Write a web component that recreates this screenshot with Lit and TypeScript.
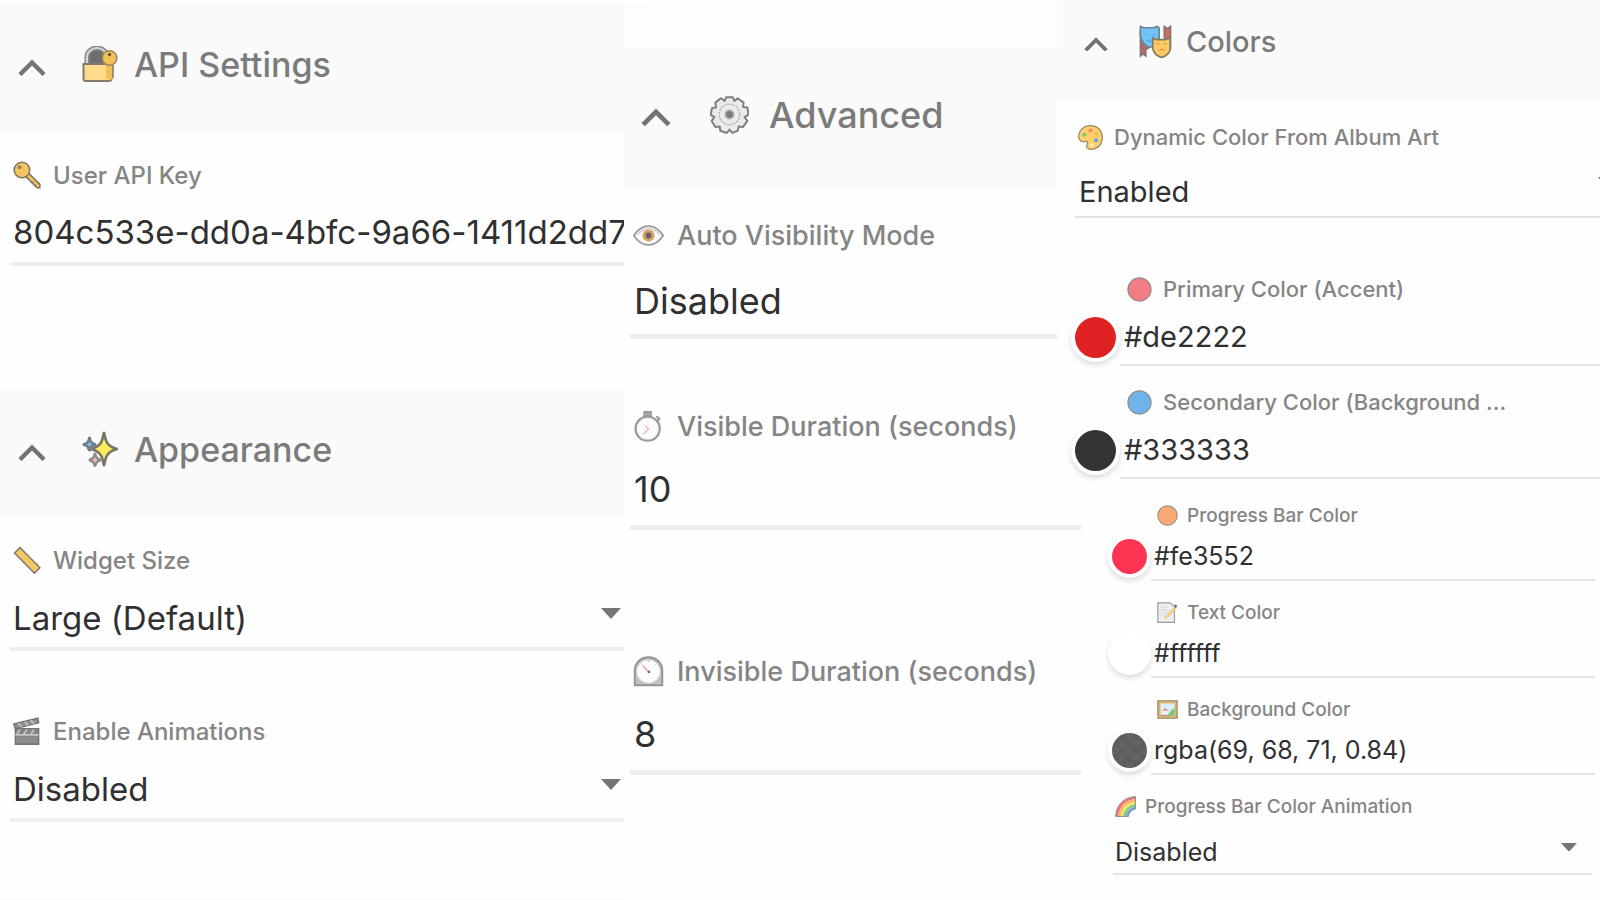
import { LitElement, html, svg, css, nothing } from "lit";
import { customElement, property } from "lit/decorators.js";

const icon = (body: unknown) =>
  html`<svg class="glyph" viewBox="0 0 36 36" aria-hidden="true">${body}</svg>`;

const disc = (fill: string) =>
  svg`<circle cx="18" cy="18" r="16.6" fill=${fill} stroke="#8c8c84" stroke-width="1.8"/>`;

const GLYPHS: Record<string, unknown> = {
  lock: svg`
    <path d="M5 18V11a10 9 0 0 1 20 0v7" fill="#6e6e6e" stroke="#8a8a8a" stroke-width="5"/>
    <path d="M5 18V11a10 9 0 0 1 20 0v7" fill="none" stroke="#d8d8d8" stroke-width="2"/>
    <path d="M1.500 18h28v14.500q0 2.500-2.500 2.500H4q-2.500 0-2.500-2.500z" fill="#ffd98c" stroke="#85796a" stroke-width="2"/>
    <path d="M24 17h7v15l-3 2.500-4-2.500z" fill="#eebf5c"/>
    <path d="M31 18v14" stroke="#85796a" stroke-width="1.500"/>
    <circle cx="27.500" cy="12" r="7.300" fill="#f0c25c" stroke="#9b855a" stroke-width="1.500"/>
    <circle cx="27.500" cy="8.500" r="1.700" fill="#66563a"/>
    <path d="M10 24h1M16 23h1M13 29h1M20 28h1" stroke="#f6ee60" stroke-width="1.500"/>`,
  key: svg`
    <path d="M15 18.500 31 34.500h3.500V30L19 14.500z" fill="#f2c35b" stroke="#7d7468" stroke-width="2"/>
    <circle cx="11.500" cy="11.500" r="10" fill="#f4c662" stroke="#7d7468" stroke-width="2"/>
    <circle cx="8.500" cy="8" r="2.500" fill="#8b816f"/>
    <path d="m23 28 3-1m1 5 3-1" stroke="#7d7468" stroke-width="1.800"/>`,
  sparkles: svg`
    <path d="M22 1c1.500 10 3.500 14.500 13 17-9.500 2.500-11.500 7-13 17-1.500-10-3.500-14.500-13-17 9.500-2.500 11.500-7 13-17z" fill="#fdec5e" stroke="#77756a" stroke-width="2.600"/>
    <path d="M7.500 6c.8 5 2 6.500 6.500 7.500-4.500 1-5.700 2.500-6.500 6.500-.8-4-2-5.500-6.500-6.500 4.500-1 5.700-2.500 6.500-7.500z" fill="#74bdf0" stroke="#727d86" stroke-width="2.600"/>
    <path d="M13 22c.8 4.500 2 6 6 7-4 1-5.200 2.500-6 6.500-.8-4-2-5.500-6-6.500 4-1 5.200-2.500 6-7z" fill="#f5b9ad" stroke="#888" stroke-width="2.400"/>`,
  ruler: svg`
    <path d="M9 2 34.500 28 27.500 35 2 9z" fill="#f3c866" stroke="#827a70" stroke-width="2"/>
    <path d="m12 6-2 2m7 2-2 2m7 2-2 2m7 2-2 2m7 2-2 2m7 2-2 2" stroke="#c9a55d" stroke-width="1.200"/>`,
  clapper: svg`
    <path d="M3 15h30v20H3z" fill="#868686" stroke="#747474" stroke-width="1.800"/>
    <path d="M1 9 32 1.500l1 6L3 15z" fill="#929292" stroke="#747474" stroke-width="1.800"/>
    <path d="m7 8 4 5m4-7 4 5m4-7 4 5M9 16l-4 6m13-6-4 6m13-6-4 6M3 23h30" stroke="#c6c6c6" stroke-width="2"/>
    <path d="M4 27h28M4 31h28" stroke="#999" stroke-width="1.200"/>`,
  gear: svg`
    <path d="M15 2h6l1.500 3.500 3-2.500 5.500 4-.5 4 4 .5 1 6.500-3.500 2.500 2.500 3.500-4 5.500-4-.5L25.500 33l-5 2-2.500-3-2.500 3-6-2-.5-4-4 .5-3.500-5.500 2.500-3.500L.5 18l1.500-6 3.500-.5L5 7l5-4 3.500 2.500z" fill="#ebebeb" stroke="#808080" stroke-width="1.900" stroke-linejoin="round"/>
    <circle cx="18" cy="18" r="9.500" fill="none" stroke="#b4b4b4" stroke-width="1.300" stroke-dasharray="2 1"/>
    <circle cx="18" cy="18" r="3.800" fill="#7b7b7b" stroke="#adadad" stroke-width="1.500"/>`,
  eye: svg`
    <path d="M1 18q7-11 17-11t17 11q-7 11-17 11T1 18z" fill="#fbfbfb" stroke="#989898" stroke-width="2"/>
    <path d="M5 17q6-7 13-7t13 7" fill="none" stroke="#c6c6c6" stroke-width="1.400"/>
    <circle cx="18" cy="18" r="7" fill="#daa06a"/>
    <circle cx="18" cy="18" r="3.400" fill="#6d625c"/>`,
  stopwatch: svg`
    <path d="M13 1h8v5h-8zM27 6l4 3-2 3" fill="#aaa" stroke="#979797" stroke-width="1.800"/>
    <circle cx="17" cy="20.500" r="14" fill="#fcfcfc" stroke="#999" stroke-width="2.600"/>
    <circle cx="17" cy="20.500" r="11" fill="none" stroke="#ddd" stroke-width="1" stroke-dasharray="1 3"/>
    <path d="m14 17 4 4-6 6" fill="none" stroke="#f0b5ac" stroke-width="1.500"/>`,
  timer: svg`
    <path d="M2 34V17C2 8 9 1.500 18 1.500S34 8 34 17v17z" fill="#c2c2c2" stroke="#949494" stroke-width="2.200"/>
    <circle cx="18" cy="18" r="13.500" fill="#fcfcfc" stroke="#dedede"/>
    <path d="M18 5v2M9 9l1 1M27 9l-1 1" stroke="#bbb"/>
    <path d="m11 11 7 7" stroke="#f0a49c" stroke-width="1.700"/>
    <circle cx="18.500" cy="18.500" r="1.600" fill="#777"/>`,
  masks: svg`
    <path d="M1.500 8v26l3-2.500 3 2.500V27l3-2v-5z" fill="#b9686a" stroke="#777" stroke-width="1.600"/>
    <path d="M34.500 26V1.500L31 4l-3.500-2.500V14l3 3z" fill="#c96b66" stroke="#777" stroke-width="1.600"/>
    <path d="M1.500 1.500 5 3h11l4-1.500 2 2V15q-3 7-10.500 9.500Q4 22 1.500 12z" fill="#70c3f4" stroke="#6c8391" stroke-width="1.800" stroke-linejoin="round"/>
    <path d="m7 10 2 1m6 0 2-1M9 17q3 2 6 0" fill="none" stroke="#4fa0d4" stroke-width="1.300"/>
    <path d="m15 14 4 2h10l5-2v13q-2 6-9 8.500-8-2-10-9.500z" fill="#fbcb63" stroke="#84775c" stroke-width="1.800" stroke-linejoin="round"/>
    <path d="m19 21 3-1m5 0 3 1m-9 7q4-3 7 0" fill="none" stroke="#d39b41" stroke-width="1.300"/>`,
  palette: svg`
    <path d="M18 1C8 1 1 8 1 17c0 5 4 8 9 7 4-1 5 1 3 4-2 4 1 7 6 7 9 0 16-7 16-17S28 1 18 1z" fill="#fbd06c" stroke="#98866a" stroke-width="1.800"/>
    <circle cx="9" cy="14" r="2.800" fill="#74cd72"/><circle cx="18" cy="8" r="2.800" fill="#f7846d"/>
    <circle cx="26.500" cy="13" r="2.600" fill="#f3be45"/><circle cx="26" cy="22" r="3" fill="#6aa7dd"/>
    <circle cx="20" cy="29" r="2.500" fill="#fff0cf"/>`,
  red: disc("#f47c85"),
  blue: disc("#70b3ea"),
  orange: disc("#f9aa75"),
  memo: svg`
    <path d="M1.500 1.500H22l8 6V35H1.500z" fill="#efefef" stroke="#999" stroke-width="2"/>
    <path d="M6 9h14M6 14h16M6 19h12M6 24h8" stroke="#d2d2d2" stroke-width="1.400"/>
    <path d="m13 29 2-5L30 8l3 3-15 16z" fill="#f8d089" stroke="#e0be85" stroke-width="1"/>
    <path d="m29 7 3-3 3 3-3 4z" fill="#777"/>`,
  picture: svg`
    <path d="M1.500 3h33v30h-33z" fill="#dcb36b" stroke="#998868" stroke-width="2"/>
    <path d="M6 7.500h24v21H6z" fill="#d9edfa"/>
    <path d="m18 28.500 7-10 5-2v12z" fill="#7bc477"/>
    <path d="M10 20h9v8h-9z" fill="#f3f3f3"/><path d="m9 20 5-5 6 5z" fill="#ec9585"/>
    <path d="M6 28h15" stroke="#9f9a8c" stroke-width="2"/>`,
  rainbow: svg`
    <g fill="none" stroke-width="4.500">
      <path d="M3.500 35C4.500 17 17 4.500 35 3.500" stroke="#ec747c"/>
      <path d="M8 35C9 20 20 9 35 8" stroke="#f8b768"/>
      <path d="M12 35c1-12 11-22 23-23" stroke="#f8e66c"/>
      <path d="M16 35c1-10 9-18 19-19" stroke="#83cf80"/>
      <path d="M20.500 35c1-7 7-13.500 14.500-14.500" stroke="#6da7e2"/>
    </g>
    <path d="M1 35C2 15 15 2 35 1v21q-11 2-12 13z" fill="none" stroke="#8a8580" stroke-width="1.600"/>`,
};

interface Field {
  id: string;
  glyph: string;
  label: string;
  kind: "text" | "number" | "select";
  value: string;
  swatch?: string;
  arrow?: boolean;
}

@customElement("setting-field")
class SettingField extends LitElement {
  @property({ attribute: false }) field!: Field;

  static styles = css`
    :host {
      display: block;
    }
    .row {
      display: grid;
      grid-template-columns: minmax(0, 1fr);
    }
    .row.tinted {
      grid-template-columns: var(--dot) minmax(0, 1fr);
      column-gap: 4px;
    }
    .tinted .label,
    .tinted .control {
      grid-column: 2;
    }
    .label {
      display: flex;
      align-items: center;
      gap: var(--label-gap);
      height: var(--label-height);
      box-sizing: border-box;
      margin-bottom: var(--control-gap);
      padding-left: var(--label-pad);
      padding-bottom: 2px;
      color: #858585;
      font-size: var(--label-size);
      font-weight: 500;
      white-space: nowrap;
    }
    .glyph {
      flex: none;
      width: var(--glyph);
      height: var(--glyph);
    }
    .control {
      display: grid;
      align-items: center;
      height: var(--control-height);
      box-sizing: border-box;
      border-bottom: var(--rule) solid var(--rule-color);
    }
    .control > * {
      grid-area: 1 / 1;
    }
    .entry {
      appearance: none;
      width: 100%;
      height: 100%;
      min-width: 0;
      box-sizing: border-box;
      margin: 0;
      padding: 0 0 0 var(--entry-pad);
      border: 0;
      outline: 0;
      border-radius: 0;
      background: transparent;
      color: #303030;
      font: inherit;
      font-size: var(--value-size);
    }
    .entry.select {
      padding-top: 2px;
    }
    .entry.number {
      padding-bottom: 4px;
    }
    .arrow {
      justify-self: end;
      width: var(--arrow);
      height: auto;
      margin-right: var(--arrow-inset);
      margin-bottom: var(--arrow-lift);
      pointer-events: none;
    }
    .swatch {
      grid-column: 1;
      grid-row: 2;
      align-self: center;
      width: var(--dot);
      height: var(--dot);
      padding: 0;
      border: 0;
      border-radius: 50%;
      background: var(--tint);
      box-shadow:
        0 0 0 4px #fff,
        0 3px 6px 3px rgb(0 0 0 / 0.18);
    }
  `;

  render() {
    const f = this.field;
    const control =
      f.kind === "select"
        ? html`<select class="entry select" id=${f.id}>
            <option>${f.value}</option>
          </select>`
        : html`<input class="entry ${f.kind}" id=${f.id} type="text" inputmode=${f.kind === "number" ? "numeric" : "text"} .value=${f.value} />`;
    return html`<div class="row ${f.swatch ? "tinted" : ""}">
      <label class="label" for=${f.id}>${icon(GLYPHS[f.glyph])}<span>${f.label}</span></label>
      ${f.swatch
        ? html`<button class="swatch" type="button" aria-label="Pick ${f.label}" style="--tint:${f.swatch}"></button>`
        : nothing}
      <div class="control">
        ${control}
        ${f.arrow
          ? html`<svg class="arrow" viewBox="0 0 20 11" aria-hidden="true"><path d="M0 0h20L10 11z" fill="#757575" /></svg>`
          : nothing}
      </div>
    </div>`;
  }
}

@customElement("section-header")
class SectionHeader extends LitElement {
  @property() glyph = "";
  @property() heading = "";

  static styles = css`
    :host {
      display: block;
      background: #fafafa;
    }
    .title {
      margin: 0;
      font: inherit;
    }
    .toggle {
      display: flex;
      align-items: center;
      width: 100%;
      height: var(--header-height);
      box-sizing: border-box;
      padding: 0 0 var(--header-drop) var(--header-pad);
      border: 0;
      background: none;
      color: #7b7b7b;
      font: inherit;
      font-size: var(--title-size);
      font-weight: 500;
      text-align: left;
    }
    .chevron {
      flex: none;
      width: var(--chevron);
      height: auto;
      margin: 6px var(--chevron-gap) 0 0;
    }
    .glyph {
      flex: none;
      width: var(--title-glyph);
      height: var(--title-glyph);
      margin-right: var(--title-gap);
    }
  `;

  render() {
    return html`<h2 class="title">
      <button class="toggle" type="button" aria-expanded="true">
        <svg class="chevron" viewBox="0 0 28 17" aria-hidden="true">
          <path d="m2 15.500 12-12 12 12" fill="none" stroke="#737373" stroke-width="4.400" />
        </svg>
        ${icon(GLYPHS[this.glyph])}<span>${this.heading}</span>
      </button>
    </h2>`;
  }
}

const API: Field = { id: "api-key", glyph: "key", label: "User API Key", kind: "text", value: "804c533e-dd0a-4bfc-9a66-1411d2dd70" };
const APPEARANCE: Field[] = [
  { id: "size", glyph: "ruler", label: "Widget Size", kind: "select", value: "Large (Default)", arrow: true },
  { id: "animations", glyph: "clapper", label: "Enable Animations", kind: "select", value: "Disabled", arrow: true },
];
const VISIBILITY: Field = { id: "visibility", glyph: "eye", label: "Auto Visibility Mode", kind: "select", value: "Disabled" };
const VISIBLE: Field = { id: "visible", glyph: "stopwatch", label: "Visible Duration (seconds)", kind: "number", value: "10" };
const INVISIBLE: Field = { id: "invisible", glyph: "timer", label: "Invisible Duration (seconds)", kind: "number", value: "8" };
const DYNAMIC: Field = { id: "dynamic", glyph: "palette", label: "Dynamic Color From Album Art", kind: "select", value: "Enabled", arrow: true };
const MAIN_COLORS: Field[] = [
  { id: "primary", glyph: "red", label: "Primary Color (Accent)", kind: "text", value: "#de2222", swatch: "#de2222" },
  { id: "secondary", glyph: "blue", label: "Secondary Color (Background ...", kind: "text", value: "#333333", swatch: "#333333" },
];
const EXTRA_COLORS: Field[] = [
  { id: "progress", glyph: "orange", label: "Progress Bar Color", kind: "text", value: "#fe3552", swatch: "#fe3552" },
  { id: "text", glyph: "memo", label: "Text Color", kind: "text", value: "#ffffff", swatch: "#ffffff" },
  {
    id: "background", glyph: "picture", label: "Background Color", kind: "text", value: "rgba(69, 68, 71, 0.84)",
    swatch: "repeating-conic-gradient(#5d5d5f 0 25%, #636365 0 50%) 0 0 / 14px 14px",
  },
];
const CYCLE: Field = { id: "cycle", glyph: "rainbow", label: "Progress Bar Color Animation", kind: "select", value: "Disabled", arrow: true };

const field = (f: Field) => html`<setting-field .field=${f}></setting-field>`;

@customElement("app-root")
class AppRoot extends LitElement {
  static styles = css`
    :host {
      display: block;
      font-family: Inter, "Open Sans", sans-serif;
      font-feature-settings: "calt" 0;
    }
    .page {
      display: grid;
      grid-template-columns: 624fr 433fr 543fr;
      min-height: 100vh;
      background: #fefefe;
      overflow: hidden;
    }
    .panel {
      display: flex;
      flex-direction: column;
      min-width: 0;
    }
    .fields {
      display: flex;
      flex-direction: column;
    }

    .general {
      --header-height: 128px;
      --header-drop: 8px;
      --header-pad: 18px;
      --chevron: 28px;
      --chevron-gap: 36px;
      --title-glyph: 36px;
      --title-gap: 16px;
      --title-size: 34px;
      --label-size: 24px;
      --label-height: 32px;
      --label-gap: 12px;
      --label-pad: 3px;
      --glyph: 28px;
      --control-gap: 10px;
      --control-height: 64px;
      --value-size: 33px;
      --entry-pad: 3px;
      --rule: 4px;
      --rule-color: #eee;
      --arrow: 20px;
      --arrow-inset: 3px;
      --arrow-lift: 8px;
      padding-top: 4px;
    }
    .general .fields {
      gap: 65px;
      padding: 28px 0 0 10px;
    }
    .general .api {
      padding-bottom: 123px;
    }
    .general .appearance {
      flex: 1;
    }
    .next {
      height: 3px;
      background: #fafafa;
    }

    .advanced {
      --header-height: 143px;
      --header-drop: 8px;
      --header-pad: 17px;
      --chevron: 30px;
      --chevron-gap: 39px;
      --title-glyph: 39px;
      --title-gap: 20px;
      --title-size: 36px;
      --label-size: 27px;
      --label-height: 36px;
      --label-gap: 13px;
      --label-pad: 3px;
      --glyph: 31px;
      --control-gap: 12px;
      --control-height: 73px;
      --value-size: 36px;
      --entry-pad: 4px;
      --rule: 5px;
      --rule-color: #eee;
      position: relative;
      z-index: 1;
      padding-top: 4px;
    }
    .seam {
      width: 29px;
      height: 3px;
      margin-bottom: 40px;
      background: #fafafa;
    }
    .advanced .fields {
      gap: 70px;
      padding: 28px 0 0 6px;
    }
    .durations {
      display: flex;
      flex-direction: column;
      gap: 124px;
      margin-right: -24px;
    }

    .colors {
      --header-height: 100px;
      --header-drop: 18px;
      --header-pad: 27px;
      --chevron: 24px;
      --chevron-gap: 31px;
      --title-glyph: 33px;
      --title-gap: 14px;
      --title-size: 29px;
      --label-size: 22px;
      --label-height: 28px;
      --label-gap: 11px;
      --label-pad: 3px;
      --glyph: 25px;
      --control-gap: 12px;
      --control-height: 54px;
      --value-size: 29px;
      --entry-pad: 4px;
      --rule: 2px;
      --rule-color: #e4e4e4;
      --arrow: 18px;
      --arrow-inset: -16px;
      --arrow-lift: 16px;
    }
    .colors .fields {
      padding: 24px 0 0 18px;
    }
    .main {
      --control-gap: 4px;
      --control-height: 58px;
      --label-pad: 7px;
      --entry-pad: 4px;
      --dot: 41px;
      display: flex;
      flex-direction: column;
      gap: 23px;
      margin-top: 58px;
    }
    .extra {
      --label-size: 19px;
      --label-height: 24px;
      --label-gap: 9px;
      --label-pad: 6px;
      --glyph: 21px;
      --control-gap: 4px;
      --control-height: 49px;
      --value-size: 25px;
      --entry-pad: 3px;
      --dot: 35px;
      display: flex;
      flex-direction: column;
      gap: 20px;
      margin: 25px 5px 0 37px;
    }
    .cycle {
      --label-size: 19px;
      --label-height: 24px;
      --label-gap: 9px;
      --label-pad: 2px;
      --glyph: 21px;
      --control-gap: 10px;
      --control-height: 46px;
      --value-size: 25px;
      --entry-pad: 2px;
      --arrow: 16px;
      --arrow-inset: 15px;
      --arrow-lift: 8px;
      margin: 20px 8px 0 38px;
    }
  `;

  render() {
    return html`<main class="page">
      <section class="panel general">
        <section-header glyph="lock" heading="API Settings"></section-header>
        <div class="fields api">${field(API)}</div>
        <section-header glyph="sparkles" heading="Appearance"></section-header>
        <div class="fields appearance">${APPEARANCE.map(field)}</div>
        <div class="next"></div>
      </section>
      <section class="panel advanced">
        <div class="seam"></div>
        <section-header glyph="gear" heading="Advanced"></section-header>
        <div class="fields">
          ${field(VISIBILITY)}
          <div class="durations">${field(VISIBLE)}${field(INVISIBLE)}</div>
        </div>
      </section>
      <section class="panel colors">
        <section-header glyph="masks" heading="Colors"></section-header>
        <div class="fields">
          ${field(DYNAMIC)}
          <div class="main">${MAIN_COLORS.map(field)}</div>
          <div class="extra">${EXTRA_COLORS.map(field)}</div>
          <div class="cycle">${field(CYCLE)}</div>
        </div>
      </section>
    </main>`;
  }
}
